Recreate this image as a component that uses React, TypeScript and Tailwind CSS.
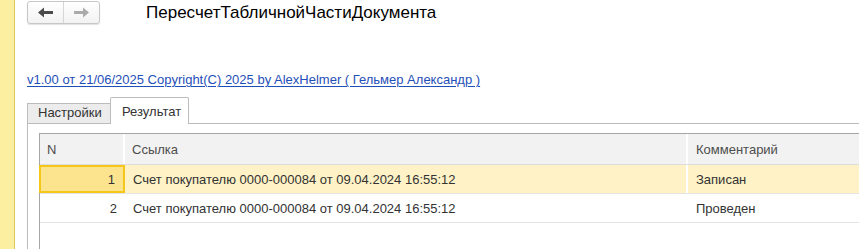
import React from 'react';

const rows = [
  { n: 1, ref: 'Счет покупателю 0000-000084 от 09.04.2024 16:55:12', note: 'Записан' },
  { n: 2, ref: 'Счет покупателю 0000-000084 от 09.04.2024 16:55:12', note: 'Проведен' },
];

function Arrow({ dir, color }: { dir: 'left' | 'right'; color: string }) {
  return (
    <svg width="15" height="11" viewBox="0 0 15 11" className={dir === 'right' ? 'rotate-180' : ''}>
      <path d="M0 5.5 L6 0.5 L6 4 L15 4 L15 7 L6 7 L6 10.5 Z" fill={color} />
    </svg>
  );
}

export default function App() {
  return (
    <div
      className="flex h-[249px] w-[859px] overflow-hidden bg-white text-[13px] leading-[15px] text-[#333]"
      style={{ fontFamily: '"Liberation Sans", Arial, sans-serif' }}
    >
      <div className="w-[15px] shrink-0 border-r border-[#e2ca62] bg-[#fcef9f]" />

      <div className="flex min-w-0 flex-1 flex-col pl-[12px]">
        {/* top bar */}
        <div className="mt-[1px] flex h-[23px] items-center">
          <div className="flex h-[23px] w-[73px] rounded-[3px] border border-[#c6c6c6] bg-gradient-to-b from-white to-[#f2f2f2] shadow-[0_1px_1px_rgba(0,0,0,0.12)]">
            <div className="flex w-[36px] items-center justify-center border-r border-[#d6d6d6]">
              <Arrow dir="left" color="#4a4a4a" />
            </div>
            <div className="flex flex-1 items-center justify-center">
              <Arrow dir="right" color="#ababab" />
            </div>
          </div>
          <div className="ml-[46px] text-[17px] leading-[22px] text-black">ПересчетТабличнойЧастиДокумента</div>
        </div>

        {/* link */}
        <div className="mt-[48px]">
          <a href="#" className="text-[#1f4fb8] underline decoration-1 underline-offset-[2px]">
            v1.00 от 21/06/2025 Copyright(C) 2025 by AlexHelmer ( Гельмер Александр )
          </a>
        </div>

        {/* tabs */}
        <div className="mt-[10px] flex items-end">
          <div className="h-[20px] w-[83px] border-l border-t border-[#bcbcbc] bg-[#ececec] pl-[10px] pt-[1px]">
            Настройки
          </div>
          <div className="relative z-10 -mb-px h-[27px] w-[79px] rounded-t-[2px] border-x border-t border-[#bcbcbc] bg-white pl-[11px] pt-[6px]">
            Результат
          </div>
        </div>

        {/* panel */}
        <div className="flex-1 border-l border-t border-[#bcbcbc] pl-[11px] pt-[9px]">
          <div className="h-full border-l border-t border-[#a6a6a6]">
            <div className="flex h-[31px] border-b border-[#dcdcdc] bg-[#f2f2f2] text-[#4d4d4d]">
              <div className="flex w-[85px] items-center border-r-2 border-white pl-[7px]">N</div>
              <div className="flex w-[563px] items-center border-r-2 border-white pl-[7px]">Ссылка</div>
              <div className="flex flex-1 items-center pl-[8px]">Комментарий</div>
            </div>
            {rows.map((r, i) => (
              <div
                key={r.n}
                className={`flex h-[29px] border-b border-[#e4e4e4] ${i === 0 ? 'bg-[#fef2c6]' : 'bg-white'}`}
              >
                <div
                  className={`flex w-[85px] items-center justify-end pr-[8px] ${
                    i === 0 ? '-ml-px w-[86px] border-2 border-[#f6c619] bg-[#fce48f]' : ''
                  }`}
                >
                  {r.n}
                </div>
                <div className={`flex w-[563px] items-center pl-[8px] ${i === 0 ? 'border-r-2 border-white' : ''}`}>
                  {r.ref}
                </div>
                <div className="flex flex-1 items-center pl-[8px]">{r.note}</div>
              </div>
            ))}
          </div>
        </div>
      </div>
    </div>
  );
}
